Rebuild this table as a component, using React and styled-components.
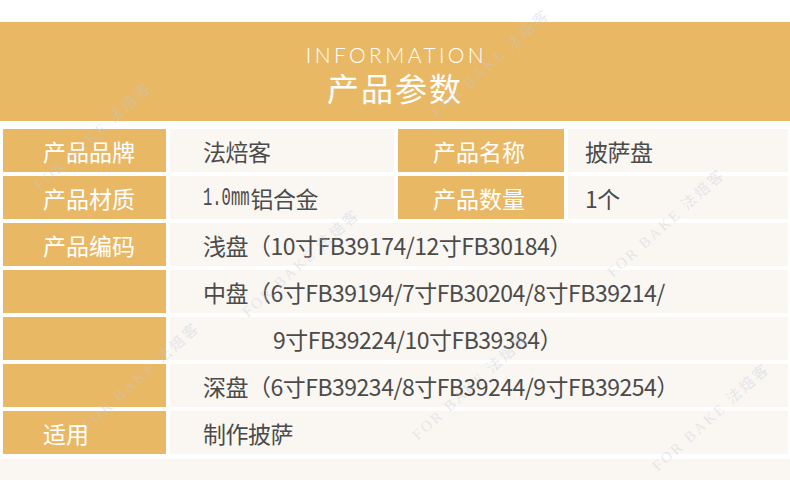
import styled, { createGlobalStyle } from "styled-components"

const GlobalStyle = createGlobalStyle`
    body {
        margin: 0;
        background: #ffffff;
    }
`

const Page = styled.div`
    position: relative;
    width: 790px;
    height: 480px;
    overflow: hidden;
    padding-top: 22px;
    box-sizing: border-box;
    background: #ffffff;
    font-family: "Noto Sans CJK SC", sans-serif;
`
const Header = styled.header`
    height: 99px;
    background: #e9b865;
    color: #ffffff;
    display: flex;
    flex-direction: column;
    align-items: center;
    justify-content: center;
    gap: 2px;
`
const English = styled.div`
    font-family: "Lato", "Liberation Sans", sans-serif;
    font-weight: 300;
    font-size: 21px;
    letter-spacing: 3.4px;
    line-height: 24px;
    margin-top: 5px;
    padding-left: 3px;
`
const Chinese = styled.h2`
    margin: 0;
    font-weight: 400;
    font-size: 32px;
    letter-spacing: 2px;
    line-height: 36px;
`
const Table = styled.section`
    display: grid;
    grid-template-columns: 163px 224px 166px 220px;
    grid-auto-rows: 43px;
    column-gap: 4px;
    row-gap: 4px;
    margin: 8px 2px 0 3px;
`
const Label = styled.div`
    background: #e9b865;
    color: #ffffff;
    font-size: 23px;
    display: flex;
    align-items: center;
    padding-left: ${p => p.$pad || 40}px;
    white-space: nowrap;
`
const Value = styled.div`
    grid-column: ${p => p.$span ? "2 / 5" : "auto"};
    background: #faf6f1;
    color: #4b4b4b;
    font-family: "Liberation Sans Narrow", "Noto Sans CJK SC", sans-serif;
    font-size: 23px;
    letter-spacing: -0.5px;
    display: flex;
    align-items: center;
    padding-left: ${p => p.$pad || 33}px;
    white-space: nowrap;
`
const Mono = styled.span`
    display: inline-block;
    font-family: "Liberation Mono", monospace;
    font-size: 15.5px;
    letter-spacing: 0;
    transform: scaleY(1.7);
    margin-right: 1px;
`
const Footer = styled.div`
    height: 22px;
    margin-top: 5px;
    background: #faf6f1;
`
const Watermark = styled.div`
    position: absolute;
    left: ${p => p.$x}px;
    top: ${p => p.$y}px;
    transform: translate(-50%, -50%) rotate(-42deg);
    font-family: "Liberation Serif", "Noto Sans CJK SC", serif;
    font-size: 15px;
    letter-spacing: 2.5px;
    color: rgba(190, 200, 220, 0.38);
    white-space: nowrap;
    pointer-events: none;
`

const marks = [
    { x: 490, y: 62 },
    { x: 92, y: 135 },
    { x: 665, y: 222 },
    { x: 300, y: 262 },
    { x: 140, y: 375 },
    { x: 470, y: 385 },
    { x: 710, y: 416 },
]

const App = () => {

    return (
        <Page>
            <GlobalStyle />
            <Header>
                <English>INFORMATION</English>
                <Chinese>产品参数</Chinese>
            </Header>
            <Table>
                <Label>产品品牌</Label>
                <Value>法焙客</Value>
                <Label $pad={35}>产品名称</Label>
                <Value $pad={17}>披萨盘</Value>

                <Label>产品材质</Label>
                <Value><Mono>1.0mm</Mono>铝合金</Value>
                <Label $pad={35}>产品数量</Label>
                <Value $pad={17}>1个</Value>

                <Label>产品编码</Label>
                <Value $span>浅盘（10寸FB39174/12寸FB30184）</Value>

                <Label />
                <Value $span>中盘（6寸FB39194/7寸FB30204/8寸FB39214/</Value>

                <Label />
                <Value $span $pad={103}>9寸FB39224/10寸FB39384）</Value>

                <Label />
                <Value $span>深盘（6寸FB39234/8寸FB39244/9寸FB39254）</Value>

                <Label>适用</Label>
                <Value $span>制作披萨</Value>
            </Table>
            <Footer />
            {marks.map((m, i) => (
                <Watermark key={i} $x={m.x} $y={m.y}>FOR BAKE 法焙客</Watermark>
            ))}
        </Page>
    )
}

export default App
